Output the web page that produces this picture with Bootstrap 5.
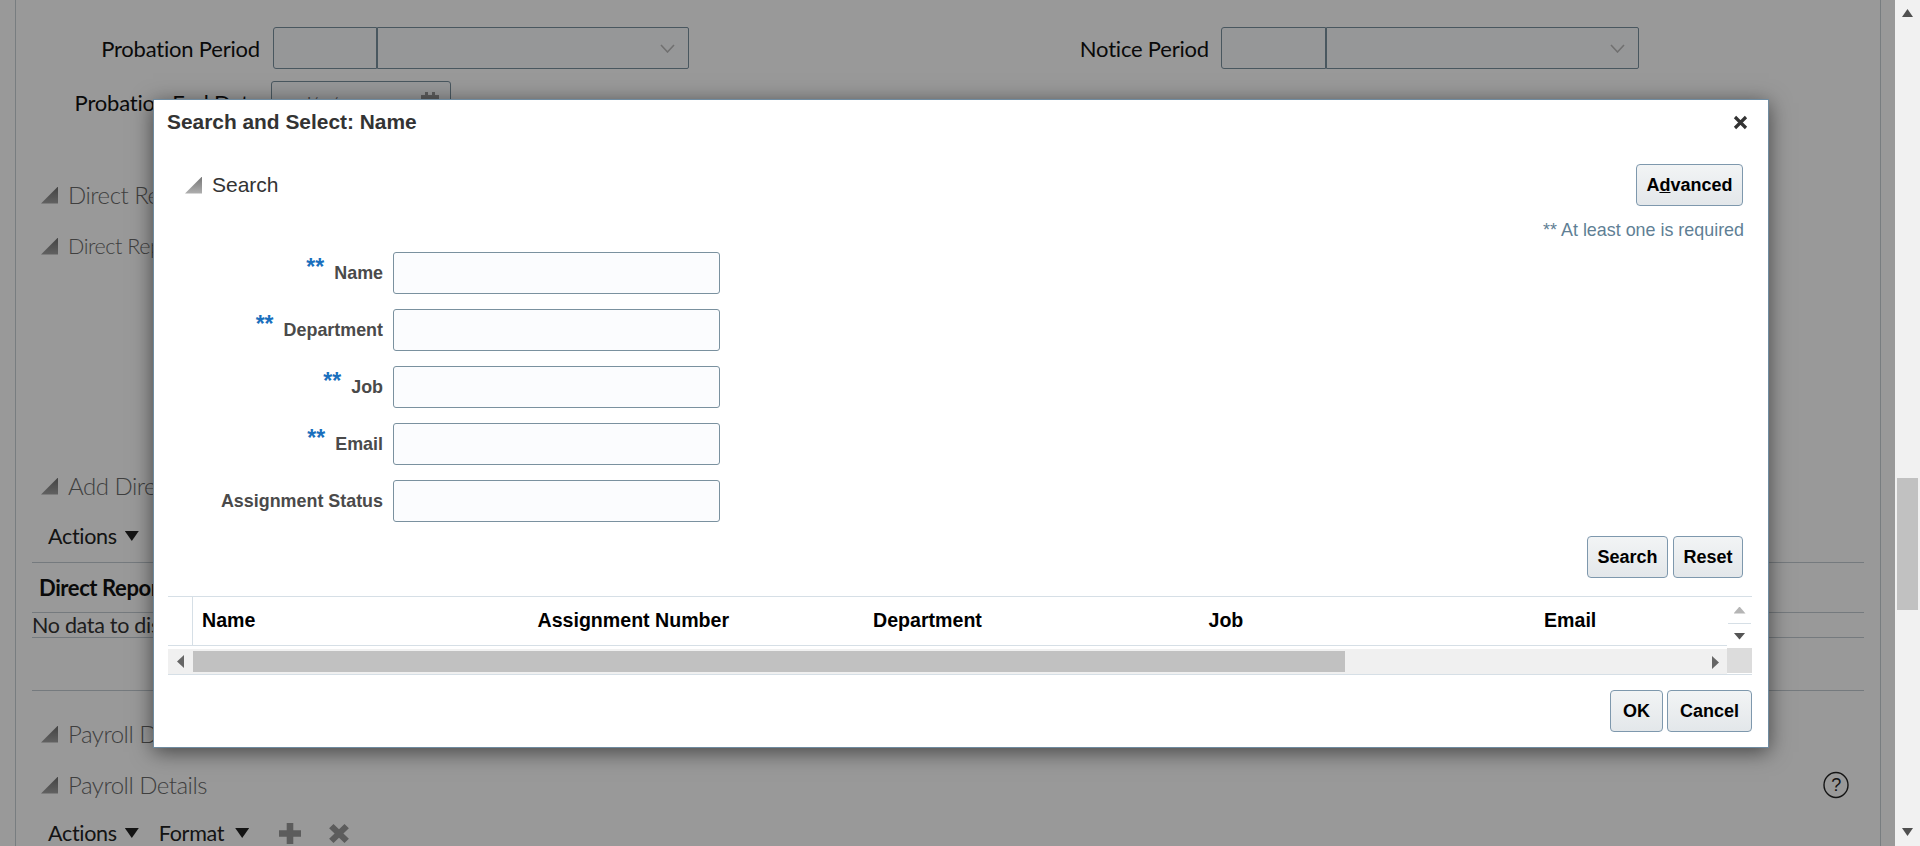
<!DOCTYPE html>
<html lang="en">
<head>
    <meta charset="UTF-8">
    <title>Search and Select: Name</title>
    <link href="https://cdn.jsdelivr.net/npm/bootstrap@5.3.1/dist/css/bootstrap.min.css" rel="stylesheet">
    <style>
        html, body { height: 846px; overflow: hidden; }
        body { font-family: "Lato", "Liberation Sans", sans-serif; color: #111; background: #fff; }

        /* page behind the dialog */
        .pg-main { flex: 1 1 auto; position: relative; height: 846px; overflow: hidden; min-width: 0; }
        .pg-frame { margin: 0 14px 0 15px; height: 846px; border-left: 1px solid #c8d0d6; border-right: 1px solid #c8d0d6; padding-top: 27px; }
        .pg-shade { position: absolute; inset: 0; background: rgba(0,0,0,.4); }
        .fld-label { width: 244px; text-align: right; font-size: 22px; letter-spacing: -.2px; color: #111; white-space: nowrap; }
        .fld-label-b { width: 520px; }
        .fld-row { height: 42px; }
        .fld-row + .fld-row { margin-top: 12px; }
        .box { height: 42px; border: 1px solid #7a919f; background: #fbfcfe; border-radius: 3px; }
        .box-n1 { width: 104px; margin-left: 13px; border-radius: 3px 0 0 3px; }
        .box-n2 { width: 312px; border-radius: 0 2px 2px 0; padding-right: 13px; }
        .box-n3 { width: 105px; margin-left: 12px; border-radius: 3px 0 0 3px; }
        .box-n4 { width: 313px; border-radius: 0 2px 2px 0; padding-right: 13px; }
        .box-date { width: 180px; margin-left: 11px; padding: 0 11px 0 30px; font-size: 16px; color: #777; }
        .chev { width: 15px; height: 9px; }
        .sec-h { margin-left: 25px; height: 34px; font-size: 24px; font-weight: 300; letter-spacing: -.5px; color: #6a6a6a; white-space: nowrap; }
        .sec-h2 { font-size: 21.5px; letter-spacing: -.45px; }
        .sec-first { margin-top: 55px; }
        .sec-second { margin-top: 17px; }
        .sec-add { margin-top: 206px; }
        .sec-pay1 { margin-top: 26px; }
        .sec-pay2 { margin-top: 17px; }
        .tri { width: 17px; height: 17px; flex: none; clip-path: polygon(100% 0, 100% 100%, 0 100%); background: linear-gradient(#707070, #a4a4a4); margin-right: 10px; }
        .tool-row { margin-left: 32px; height: 34px; font-size: 21.5px; letter-spacing: -.3px; color: #222; white-space: nowrap; }
        .tool-first { margin-top: 16px; }
        .tool-last { margin-top: 14px; }
        .tool-fmt { margin-left: 20px; }
        .tool-car { margin-left: 11px; }
        .tool-plus { margin-left: 30px; }
        .tool-del { margin-left: 27px; }
        .caret-d { width: 14px; height: 10px; flex: none; background: #222; clip-path: polygon(0 0, 100% 0, 50% 100%); }
        .rule-x { margin: 0 16px; height: 1px; background: #c3ccd3; }
        .rule-a { margin-top: 9px; }
        .rule-b { margin-top: 52px; }
        .dr-head { margin: 0 16px; height: 50px; padding-left: 7px; font-size: 22px; font-weight: 700; letter-spacing: -.4px; border-bottom: 1px solid #c3ccd3; white-space: nowrap; }
        .dr-empty { margin: 0 16px; height: 25px; font-size: 21.5px; letter-spacing: -.3px; border-bottom: 1px solid #c3ccd3; color: #333; white-space: nowrap; }
        .help-ic { width: 26px; height: 28px; margin-right: 31px; }
        .act-ic { width: 22px; height: 21px; flex: none; }

        /* browser scrollbar */
        .pg-scroll { width: 25px; flex: none; height: 846px; background: #f1f1f1; padding: 0 2px; }
        .pg-scroll .thumb { height: 132px; background: #c1c1c1; margin-top: 461px; }
        .arr-u, .arr-d { width: 11px; height: 8px; background: #505050; }
        .arr-u { clip-path: polygon(50% 0, 100% 100%, 0 100%); margin: 9px auto 0; }
        .arr-d { clip-path: polygon(0 0, 100% 0, 50% 100%); margin: 218px auto 0; }

        /* dialog */
        .dlg { position: absolute; left: 153px; top: 99px; width: 1616px; height: 649px; background: #fff; border: 1px solid #6f8ba0; box-shadow: 0 4px 20px rgba(0,0,0,.55); font-family: "Liberation Sans", Arial, sans-serif; }
        .dlg-title { height: 44px; padding: 0 20px 0 13px; font-size: 20.9px; font-weight: 700; color: #333; }
        .dlg-x { width: 15px; height: 15px; }
        .dlg-search { height: 42px; margin-top: 20px; padding: 0 25px 0 31px; font-size: 21px; color: #333; }
        .dlg-search .tri { background: linear-gradient(#777, #b0b0b0); }
        .dlg-req { margin-top: 13px; height: 22px; padding-right: 24px; text-align: right; font-size: 17.9px; line-height: 22px; color: #5f7f95; }
        .q-list { margin-top: 11px; }
        .q-row { height: 42px; margin-bottom: 15px; }
        .q-lab { width: 229px; margin-bottom: 0; font-size: 17.9px; font-weight: 700; color: #4a4a4a; white-space: nowrap; text-align: right; }
        .q-star { color: #1a6fbd; font-size: 23px; font-weight: 700; line-height: 1; position: relative; top: -4px; margin-right: 10px; }
        .q-inp.form-control { width: 327px; height: 42px; margin-left: 10px; border: 1px solid #7a919f; background: #fbfcfe; border-radius: 3px; }
        .btn.btn-ora { height: 42px; padding: 0; font-family: "Liberation Sans", Arial, sans-serif; font-size: 18px; font-weight: 700; color: #000; background: linear-gradient(#f2f4f5, #e3e7ea); border: 1px solid #7e98ad; border-radius: 4px; }
        .btn-adv { width: 107px; }
        .btn-srch { width: 81px; }
        .btn-rst { width: 70px; margin-left: 5px; }
        .btn-ok { width: 53px; }
        .btn-can { width: 85px; margin-left: 4px; }
        .q-btns { margin-top: -1px; padding-right: 25px; }
        .res { margin: 18px 16px 0 14px; border-bottom: 1px solid #d6dfe6; }
        .res-main { flex: 1 1 auto; min-width: 0; }
        .res-head { height: 50px; border-top: 1px solid #d6dfe6; border-bottom: 1px solid #d6dfe6; font-size: 19.6px; font-weight: 700; color: #000; }
        .res-corner { width: 25px; flex: none; height: 100%; border-right: 1px solid #d6dfe6; }
        .res-col { padding-left: 9px; flex: none; white-space: nowrap; }
        .res-w { width: 335.5px; }
        .res-hs { height: 25px; margin-top: 3px; background: #f0f0f0; padding-top: 2px; }
        .hs-btn { width: 25px; flex: none; height: 21px; }
        .hs-thumb { width: 1152px; height: 21px; background: #c1c1c1; flex: none; }
        .hs-l, .hs-r { width: 7px; height: 13px; background: #666; }
        .hs-l { clip-path: polygon(100% 0, 100% 100%, 0 50%); }
        .hs-r { clip-path: polygon(0 0, 100% 50%, 0 100%); margin-left: auto; margin-right: 8px; }
        .res-vs { width: 25px; flex: none; border-top: 1px solid #d6dfe6; }
        .vs-up { height: 26px; }
        .vs-dn { height: 25px; border-top: 1px solid #d6dfe6; margin: 0 1px; }
        .vs-corner { height: 25px; background: #dcdcdc; }
        .vs-tri-u, .vs-tri-d { width: 12px; height: 7px; }
        .vs-tri-u { background: #b5b5b5; clip-path: polygon(50% 0, 100% 100%, 0 100%); }
        .vs-tri-d { background: #555; clip-path: polygon(0 0, 100% 0, 50% 100%); }
        .dlg-foot { margin-top: 15px; padding-right: 16px; }
    </style>
</head>
<body class="d-flex">
    <div class="pg-main">
        <div class="pg-frame">
            <div class="d-flex align-items-center fld-row">
                <div class="fld-label">Probation Period</div>
                <div class="box box-n1"></div>
                <div class="box box-n2 d-flex align-items-center justify-content-end">
                    <svg class="chev" viewBox="0 0 15 9"><path d="M1 1l6.5 7L14 1" fill="none" stroke="#bbb" stroke-width="1.6"/></svg>
                </div>
                <div class="fld-label fld-label-b">Notice Period</div>
                <div class="box box-n3"></div>
                <div class="box box-n4 d-flex align-items-center justify-content-end">
                    <svg class="chev" viewBox="0 0 15 9"><path d="M1 1l6.5 7L14 1" fill="none" stroke="#bbb" stroke-width="1.6"/></svg>
                </div>
            </div>
            <div class="d-flex align-items-center fld-row">
                <div class="fld-label">Probation End Date</div>
                <div class="box box-date d-flex align-items-center justify-content-between">
                    <span>d/m/yy</span>
                    <svg width="18" height="20" viewBox="0 0 18 20"><path d="M4 0h3v3h4V0h3v3h4v17H0V3h4z" fill="#999"/></svg>
                </div>
            </div>

            <div class="sec-h d-flex align-items-center sec-first">
                <div class="tri"></div><span>Direct Reports</span>
            </div>
            <div class="sec-h sec-h2 d-flex align-items-center sec-second">
                <div class="tri"></div><span>Direct Reports</span>
            </div>
            <div class="sec-h d-flex align-items-center sec-add">
                <div class="tri"></div><span>Add Direct Reports</span>
            </div>
            <div class="tool-row d-flex align-items-center gap-2 tool-first">
                <span>Actions</span><div class="caret-d"></div>
            </div>
            <div class="rule-x rule-a"></div>
            <div class="dr-head d-flex align-items-center">Direct Reports</div>
            <div class="dr-empty d-flex align-items-center">No data to display.</div>
            <div class="rule-x rule-b"></div>
            <div class="sec-h d-flex align-items-center sec-pay1">
                <div class="tri"></div><span>Payroll Details</span>
            </div>
            <div class="sec-h d-flex align-items-center justify-content-between sec-pay2">
                <div class="d-flex align-items-center"><div class="tri"></div><span>Payroll Details</span></div>
                <svg class="help-ic" viewBox="0 0 26 28"><ellipse cx="13" cy="14" rx="12" ry="12.5" fill="none" stroke="#222" stroke-width="1.4"/><text x="13" y="20" text-anchor="middle" font-family="Liberation Sans" font-size="18" fill="#222">?</text></svg>
            </div>
            <div class="tool-row d-flex align-items-center tool-last">
                <span>Actions</span><div class="caret-d ms-2"></div>
                <span class="tool-fmt">Format</span><div class="caret-d tool-car"></div>
                <svg class="act-ic tool-plus" viewBox="0 0 20 20" preserveAspectRatio="none"><path d="M7 0h6v7h7v6h-7v7H7v-7H0V7h7z" fill="#9a9a9a"/></svg>
                <svg class="act-ic tool-del" viewBox="0 0 20 20" preserveAspectRatio="none"><path d="M1 5l4-4 5 5 5-5 4 4-5 5 5 5-4 4-5-5-5 5-4-4 5-5z" fill="#9a9a9a"/></svg>
            </div>
        </div>
        <div class="pg-shade"></div>
    </div>

    <div class="pg-scroll">
        <div class="arr-u"></div>
        <div class="thumb"></div>
        <div class="arr-d"></div>
    </div>

    <div class="dlg">
        <div class="dlg-title d-flex align-items-center justify-content-between">
            <span>Search and Select: Name</span>
            <svg class="dlg-x" viewBox="0 0 15 15"><path d="M2 2l11 11M13 2L2 13" stroke="#333" stroke-width="3.2"/></svg>
        </div>
        <div class="dlg-search d-flex align-items-center justify-content-between">
            <div class="d-flex align-items-center"><div class="tri"></div><span>Search</span></div>
            <button type="button" class="btn btn-ora btn-adv">A<u>d</u>vanced</button>
        </div>
        <div class="dlg-req">** At least one is required</div>
        <form class="q-list">
            <div class="q-row d-flex align-items-center">
                <label class="q-lab"><span class="q-star">**</span>Name</label>
                <input type="text" class="form-control q-inp">
            </div>
            <div class="q-row d-flex align-items-center">
                <label class="q-lab"><span class="q-star">**</span>Department</label>
                <input type="text" class="form-control q-inp">
            </div>
            <div class="q-row d-flex align-items-center">
                <label class="q-lab"><span class="q-star">**</span>Job</label>
                <input type="text" class="form-control q-inp">
            </div>
            <div class="q-row d-flex align-items-center">
                <label class="q-lab"><span class="q-star">**</span>Email</label>
                <input type="text" class="form-control q-inp">
            </div>
            <div class="q-row d-flex align-items-center">
                <label class="q-lab">Assignment Status</label>
                <input type="text" class="form-control q-inp">
            </div>
        </form>
        <div class="q-btns d-flex justify-content-end">
            <button type="button" class="btn btn-ora btn-srch">Search</button>
            <button type="button" class="btn btn-ora btn-rst">Reset</button>
        </div>
        <div class="res d-flex">
            <div class="res-main">
                <div class="res-head d-flex align-items-center">
                    <div class="res-corner"></div>
                    <div class="res-col res-w">Name</div>
                    <div class="res-col res-w">Assignment Number</div>
                    <div class="res-col res-w">Department</div>
                    <div class="res-col res-w">Job</div>
                    <div class="res-col">Email</div>
                </div>
                <div class="res-hs d-flex">
                    <div class="hs-btn d-flex align-items-center justify-content-center"><div class="hs-l"></div></div>
                    <div class="hs-thumb"></div>
                    <div class="flex-grow-1 d-flex align-items-center"><div class="hs-r"></div></div>
                </div>
            </div>
            <div class="res-vs">
                <div class="vs-up d-flex align-items-center justify-content-center"><div class="vs-tri-u"></div></div>
                <div class="vs-dn d-flex align-items-center justify-content-center"><div class="vs-tri-d"></div></div>
                <div class="vs-corner"></div>
            </div>
        </div>
        <div class="dlg-foot d-flex justify-content-end">
            <button type="button" class="btn btn-ora btn-ok">OK</button>
            <button type="button" class="btn btn-ora btn-can">Cancel</button>
        </div>
    </div>

    <script src="https://cdn.jsdelivr.net/npm/bootstrap@5.3.1/dist/js/bootstrap.bundle.min.js"></script>
</body>
</html>
